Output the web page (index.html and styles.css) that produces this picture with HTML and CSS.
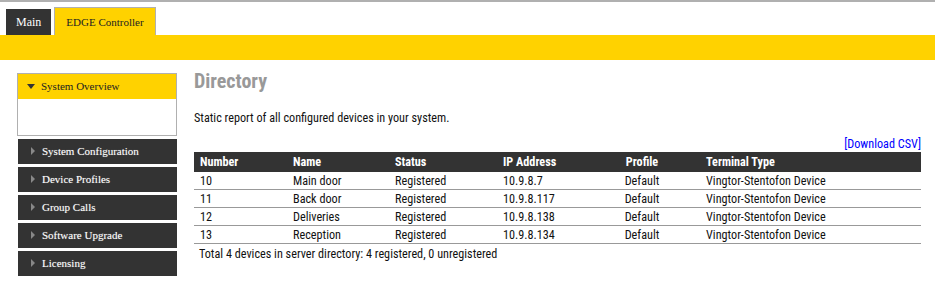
FILE: index.html
```html
<!DOCTYPE html>
<html lang="en">
<head>
  <meta charset="UTF-8" />
  <title>EDGE Controller - Directory</title>
  <link rel="stylesheet" href="styles.css">
</head>
<body>
  <header class="top">
    <nav class="tabs">
      <a class="tab" href="#">Main</a>
      <a class="tab active" href="#">EDGE Controller</a>
    </nav>
    <div class="bar"></div>
  </header>

  <div class="page">
    <aside class="sidebar">
      <div class="group open">
        <div class="group-title"><span class="arrow down"></span>System Overview</div>
        <div class="group-body"></div>
      </div>
      <div class="item"><span class="arrow right"></span>System Configuration</div>
      <div class="item"><span class="arrow right"></span>Device Profiles</div>
      <div class="item"><span class="arrow right"></span>Group Calls</div>
      <div class="item"><span class="arrow right"></span>Software Upgrade</div>
      <div class="item"><span class="arrow right"></span>Licensing</div>
    </aside>

    <main class="content">
      <h1>Directory</h1>
      <p class="intro">Static report of all configured devices in your system.</p>
      <div class="csv"><a href="#">[Download CSV]</a></div>
      <table class="devices">
        <colgroup>
          <col class="c-num">
          <col class="c-name">
          <col class="c-status">
          <col class="c-ip">
          <col class="c-prof">
          <col>
        </colgroup>
        <thead>
          <tr>
            <th>Number</th>
            <th>Name</th>
            <th>Status</th>
            <th>IP Address</th>
            <th class="center">Profile</th>
            <th>Terminal Type</th>
          </tr>
        </thead>
        <tbody>
          <tr><td>10</td><td>Main door</td><td>Registered</td><td>10.9.8.7</td><td class="center">Default</td><td>Vingtor-Stentofon Device</td></tr>
          <tr><td>11</td><td>Back door</td><td>Registered</td><td>10.9.8.117</td><td class="center">Default</td><td>Vingtor-Stentofon Device</td></tr>
          <tr><td>12</td><td>Deliveries</td><td>Registered</td><td>10.9.8.138</td><td class="center">Default</td><td>Vingtor-Stentofon Device</td></tr>
          <tr><td>13</td><td>Reception</td><td>Registered</td><td>10.9.8.134</td><td class="center">Default</td><td>Vingtor-Stentofon Device</td></tr>
        </tbody>
      </table>
      <p class="total">Total 4 devices in server directory: 4 registered, 0 unregistered</p>
    </main>
  </div>
</body>
</html>
```

FILE: styles.css
```css
body {
  margin: 0;
  padding: 0;
  background: #fff;
  font-family: "Liberation Sans Narrow", "Roboto Condensed", Roboto, sans-serif;
  font-size: 12.2px;
  color: #111;
  border-top: 2px solid #b0b0b0;
}

.tabs {
  display: flex;
  align-items: flex-end;
  gap: 3px;
  padding: 5px 0 0 6px;
  height: 28px;
  box-sizing: content-box;
}

.tab {
  font-family: "Liberation Serif", serif;
  font-size: 12px;
  text-decoration: none;
  height: 26px;
  line-height: 26px;
  box-sizing: border-box;
}

.tab:first-child {
  background-color: #333;
  color: #fff;
  padding: 0 10px;
}

.tab.active {
  background-color: #ffd200;
  color: #222;
  font-size: 11px;
  height: 28px;
  line-height: 28px;
  border: 1px solid #b0b0b0;
  border-bottom: none;
  padding: 0 11px;
}

.bar {
  height: 25px;
  background-color: #ffd200;
}

.page {
  display: flex;
  padding: 13px 14px 0 17px;
  gap: 17px;
}

.sidebar {
  width: 160px;
  flex-shrink: 0;
  font-family: "Liberation Serif", serif;
  font-size: 11px;
}

.group {
  border: 1px solid #b0b0b0;
  margin-bottom: 3px;
}

.group-title {
  background-color: #ffd200;
  color: #222;
  height: 25px;
  line-height: 25px;
  padding-left: 9px;
}

.group-body {
  height: 36px;
}

.item {
  background-color: #333;
  color: #fff;
  height: 25px;
  line-height: 25px;
  margin: 0 0 3px 1px;
  padding-left: 13px;
  text-shadow: 0 0 1px rgba(255,255,255,0.4);
}

.arrow {
  display: inline-block;
  width: 0;
  height: 0;
  margin-right: 8px;
  vertical-align: middle;
  position: relative;
  top: -1px;
}

.arrow.down {
  border-left: 4px solid transparent;
  border-right: 4px solid transparent;
  border-top: 5px solid #333;
  margin-right: 6px;
}

.arrow.right {
  border-top: 4px solid transparent;
  border-bottom: 4px solid transparent;
  border-left: 4px solid #888;
  margin-right: 7px;
}

.content {
  flex: 1;
}

h1 {
  margin: 0;
  font-size: 20px;
  line-height: 16px;
  font-weight: bold;
  color: #999;
}

.intro {
  margin: 21px 0 0;
  line-height: 16px;
}

.csv {
  text-align: right;
  margin-top: 11px;
  line-height: 14px;
}

.csv a {
  color: #00f;
  text-decoration: none;
}

.devices {
  width: 100%;
  border-collapse: collapse;
  table-layout: fixed;
  margin-top: 1px;
}

.c-num { width: 93px; }
.c-name { width: 102px; }
.c-status { width: 108px; }
.c-ip { width: 87px; }
.c-prof { width: 116px; }

.devices th {
  background-color: #333;
  color: #fff;
  font-weight: bold;
  text-align: left;
  height: 20px;
  padding: 0 6px;
}

.devices td {
  height: 17px;
  padding: 0 6px;
  border-bottom: 1px solid #999;
}

.devices .center {
  text-align: center;
}

.total {
  margin: 2px 0 0 5px;
  line-height: 16px;
}
```
